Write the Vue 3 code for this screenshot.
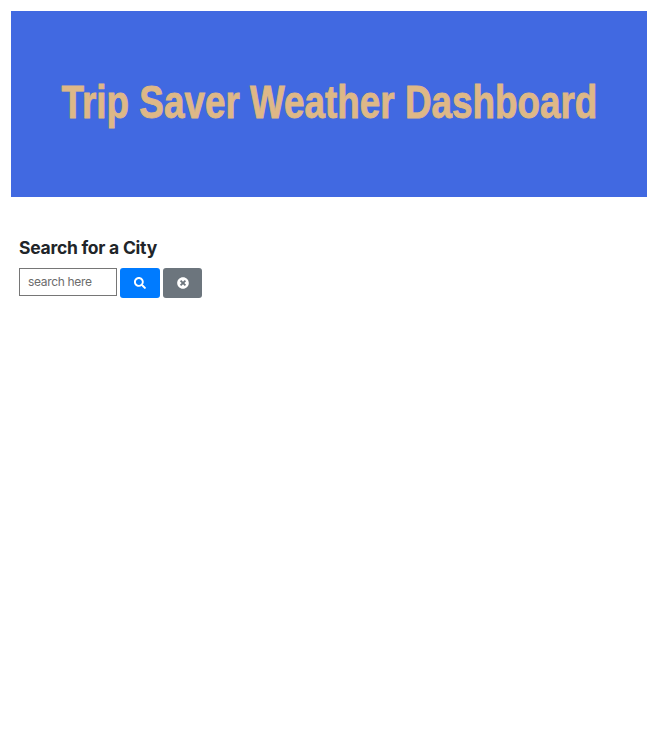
<script setup>
import { ref } from 'vue'
const city = ref('')
</script>

<template>
  <div class="page">
    <header class="banner"><h1>Trip Saver Weather Dashboard</h1></header>
    <main class="search">
      <h2>Search for a City</h2>
      <div class="controls">
        <input v-model="city" type="text" placeholder="search here" />
        <button class="find" aria-label="Search">
          <svg viewBox="0 0 512 512"><path d="M505 442.7L405.3 343c-4.5-4.5-10.6-7-17-7H372c27.6-35.3 44-79.7 44-128C416 93.1 322.9 0 208 0S0 93.1 0 208s93.1 208 208 208c48.3 0 92.7-16.4 128-44v16.3c0 6.4 2.5 12.5 7 17l99.7 99.7c9.4 9.4 24.6 9.4 33.9 0l28.3-28.3c9.4-9.4 9.4-24.6.1-34zM208 336c-70.7 0-128-57.2-128-128 0-70.7 57.2-128 128-128 70.7 0 128 57.2 128 128 0 70.7-57.2 128-128 128z" /></svg>
        </button>
        <button class="clear" aria-label="Clear">
          <svg viewBox="0 0 512 512"><path d="M256 8C119 8 8 119 8 256s111 248 248 248 248-111 248-248S393 8 256 8zm121.6 313.1c4.7 4.7 4.7 12.3 0 17L338 377.6c-4.7 4.7-12.3 4.7-17 0L256 312l-65.1 65.6c-4.7 4.7-12.3 4.7-17 0L134.4 338c-4.7-4.7-4.7-12.3 0-17l65.6-65-65.6-65.1c-4.7-4.7-4.7-12.3 0-17l39.6-39.6c4.7-4.7 12.3-4.7 17 0l65 65.7 65.1-65.6c4.7-4.7 12.3-4.7 17 0l39.6 39.6c4.7 4.7 4.7 12.3 0 17L312 256l65.6 65.1z" /></svg>
        </button>
      </div>
    </main>
  </div>
</template>

<style scoped>
.page { padding: 11px 15px 0 11px; }
.banner {
  height: 186px;
  background: #4169e1;
  display: flex;
  align-items: center;
  justify-content: center;
}
h1 {
  margin: 0 0 4px;
  color: #deb887;
  font: bold 46px/54px "Liberation Sans", sans-serif;
  -webkit-text-stroke: 0.9px #deb887;
  white-space: nowrap;
  transform: scaleX(0.801);
}
.search { padding: 40px 8px 0; }
h2 {
  margin: 0 0 9px;
  color: #212529;
  font: 700 17.5px/22px Inter, sans-serif;
  letter-spacing: -0.25px;
}
.controls { display: flex; align-items: flex-start; gap: 3px; }
input {
  box-sizing: border-box;
  width: 98px;
  height: 28px;
  padding: 0 8px 2px;
  border: 1px solid #767676;
  border-radius: 0;
  font: 12px Inter, sans-serif;
  letter-spacing: -0.32px;
  background: #fff;
}
input::placeholder { color: #6c6c6c; }
button {
  display: flex;
  align-items: center;
  justify-content: center;
  width: 40px;
  height: 30px;
  padding: 0 0 1px;
  border: 0;
  border-radius: 3px;
}
.find { background: #007bff; }
.clear { width: 39px; background: #6c757d; }
svg { width: 12px; height: 12px; fill: #fff; }
</style>

<style>
body { background: #fff; }
</style>
